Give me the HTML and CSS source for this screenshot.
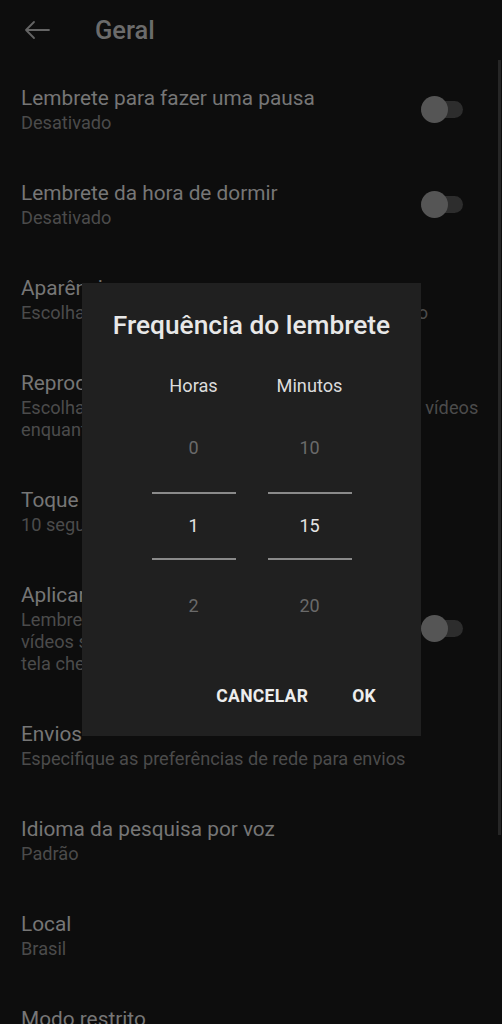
FILE: index.html
```html
<!DOCTYPE html>
<html lang="pt-BR">
<head>
<meta charset="utf-8">
<title>Geral</title>
<link rel="stylesheet" href="styles.css">
</head>
<body>
<div class="screen">
  <header class="topbar">
    <svg class="back" width="28" height="20" viewBox="0 0 28 20" aria-hidden="true">
      <path d="M26 10H3M11 2L3 10L11 18" fill="none" stroke="#646464" stroke-width="1.8" stroke-linecap="round" stroke-linejoin="round"/>
    </svg>
    <h1 class="title">Geral</h1>
  </header>

  <ul class="list">
    <li class="item">
      <div class="text">
        <div class="label">Lembrete para fazer uma pausa</div>
        <div class="sub">Desativado</div>
      </div>
      <span class="toggle"></span>
    </li>
    <li class="item">
      <div class="text">
        <div class="label">Lembrete da hora de dormir</div>
        <div class="sub">Desativado</div>
      </div>
      <span class="toggle"></span>
    </li>
    <li class="item">
      <div class="text">
        <div class="label">Aparência</div>
        <div class="sub">Escolha a sua preferência de tema claro ou escuro</div>
      </div>
    </li>
    <li class="item">
      <div class="text">
        <div class="label">Reprodução nos feeds</div>
        <div class="sub">Escolha se você quer que seus feeds reproduzam vídeos<br>enquanto você navega</div>
      </div>
    </li>
    <li class="item">
      <div class="text">
        <div class="label">Toque duas vezes para buscar</div>
        <div class="sub">10 segundos</div>
      </div>
    </li>
    <li class="item">
      <div class="text">
        <div class="label">Aplicar zoom para preencher</div>
        <div class="sub">Lembrete para aplicar zoom<br>vídeos sempre no modo de<br>tela cheia</div>
      </div>
      <span class="toggle"></span>
    </li>
    <li class="item">
      <div class="text">
        <div class="label">Envios</div>
        <div class="sub">Especifique as preferências de rede para envios</div>
      </div>
    </li>
    <li class="item">
      <div class="text">
        <div class="label">Idioma da pesquisa por voz</div>
        <div class="sub">Padrão</div>
      </div>
    </li>
    <li class="item">
      <div class="text">
        <div class="label">Local</div>
        <div class="sub">Brasil</div>
      </div>
    </li>
    <li class="item">
      <div class="text">
        <div class="label">Modo restrito</div>
        <div class="sub">Desativado</div>
      </div>
    </li>
  </ul>

  <div class="scrollbar"></div>

  <div class="dialog" role="dialog">
    <h2 class="dialog-title">Frequência do lembrete</h2>
    <div class="picker">
      <div class="col">
        <div class="col-label">Horas</div>
        <div class="num dim top">0</div>
        <div class="num sel">1</div>
        <div class="num dim bottom">2</div>
      </div>
      <div class="col">
        <div class="col-label">Minutos</div>
        <div class="num dim top">10</div>
        <div class="num sel">15</div>
        <div class="num dim bottom">20</div>
      </div>
    </div>
    <div class="actions">
      <span class="btn">CANCELAR</span>
      <span class="btn">OK</span>
    </div>
  </div>
</div>
</body>
</html>
```

FILE: styles.css
```css
* { box-sizing: border-box; }
html, body {
  margin: 0;
  padding: 0;
  background: #0d0d0d;
}
body {
  font-family: Roboto, "Noto Sans", "Liberation Sans", sans-serif;
}
.screen {
  position: relative;
  width: 502px;
  height: 1024px;
  overflow: hidden;
  background: #0d0d0d;
}
.topbar {
  height: 62px;
  display: flex;
  align-items: center;
  padding-left: 23px;
  padding-bottom: 2px;
}
.back { display: block; margin-right: 44px; }
.title {
  margin: 0;
  font-size: 25.5px;
  font-weight: 500;
  color: #6b6b6b;
}
.list {
  list-style: none;
  margin: 0;
  padding: 0;
}
.item {
  display: flex;
  align-items: center;
  padding: 22px 39px 23px 21px;
}
.text { flex: 1; min-width: 0; }
.label {
  font-size: 20.8px;
  line-height: 28px;
  color: #767676;
  white-space: nowrap;
}
.sub {
  font-size: 18.2px;
  line-height: 22px;
  color: #4b4b4b;
  white-space: nowrap;
}
.toggle {
  position: relative;
  flex: none;
  width: 42px;
  height: 27px;
}
.toggle::before {
  content: "";
  position: absolute;
  left: 8px;
  right: 0;
  top: 5px;
  height: 17px;
  border-radius: 9px;
  background: #2d2d2d;
}
.toggle::after {
  content: "";
  position: absolute;
  left: 0;
  top: 0;
  width: 27px;
  height: 27px;
  border-radius: 50%;
  background: #555555;
}
.scrollbar {
  position: absolute;
  right: 1px;
  top: 60px;
  width: 3px;
  height: 775px;
  background: #262626;
}
.dialog {
  position: absolute;
  left: 82px;
  top: 283px;
  width: 339px;
  height: 453px;
  background: #202020;
  padding-top: 25px;
  display: flex;
  flex-direction: column;
  align-items: center;
}
.dialog-title {
  margin: 0;
  font-size: 26.3px;
  line-height: 34px;
  font-weight: 500;
  color: #e8e8e8;
}
.picker {
  display: flex;
  gap: 32px;
  margin-top: 30px;
}
.col {
  width: 84px;
  display: flex;
  flex-direction: column;
  align-items: stretch;
  text-align: center;
}
.col-label {
  font-size: 18.2px;
  line-height: 28px;
  color: #dcdcdc;
}
.num {
  font-size: 18px;
  line-height: 24px;
}
.dim { color: #6a6a6a; }
.top {
  height: 92px;
  padding-top: 36px;
}
.sel {
  height: 68px;
  line-height: 64px;
  color: #e4e4e4;
  border-top: 2px solid #8a8a8a;
  border-bottom: 2px solid #8a8a8a;
}
.bottom {
  height: 70px;
  padding-top: 34px;
}
.actions {
  align-self: stretch;
  display: flex;
  justify-content: flex-end;
  gap: 44px;
  margin-top: 48px;
  padding-right: 45px;
}
.btn {
  font-size: 17.5px;
  line-height: 36px;
  font-weight: 700;
  color: #ededed;
  letter-spacing: 0.3px;
}
```
